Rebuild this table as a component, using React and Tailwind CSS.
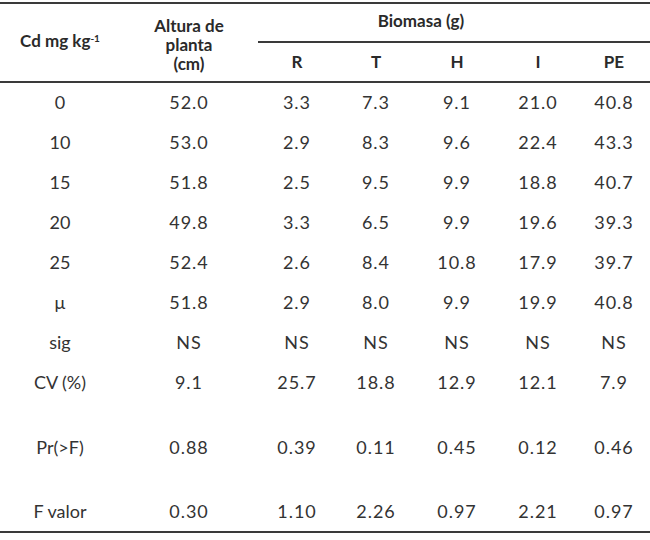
import React from 'react';

const rows = [
  ['0', '52.0', '3.3', '7.3', '9.1', '21.0', '40.8'],
  ['10', '53.0', '2.9', '8.3', '9.6', '22.4', '43.3'],
  ['15', '51.8', '2.5', '9.5', '9.9', '18.8', '40.7'],
  ['20', '49.8', '3.3', '6.5', '9.9', '19.6', '39.3'],
  ['25', '52.4', '2.6', '8.4', '10.8', '17.9', '39.7'],
  ['μ', '51.8', '2.9', '8.0', '9.9', '19.9', '40.8'],
  ['sig', 'NS', 'NS', 'NS', 'NS', 'NS', 'NS'],
  ['CV (%)', '9.1', '25.7', '18.8', '12.9', '12.1', '7.9'],
];

const Row = ({ cells, h }) => (
  <tr className={h}>
    {cells.map((c, i) => (
      <td key={i} className={i === 0 ? 'text-center align-middle' : 'text-center align-middle tracking-[1px]'}>{c}</td>
    ))}
  </tr>
);

const App = () => {
  return (
    <div className="w-[650px] h-[540px] bg-white pt-[2px] text-[#333] text-[18px]" style={{ fontFamily: 'Lato, "Open Sans", sans-serif' }}>
      <table className="w-full border-collapse border-t-2 border-b-2 border-[#3a3a3a] table-fixed">
        <colgroup>
          <col className="w-[120px]" />
          <col className="w-[138px]" />
          <col className="w-[78px]" />
          <col className="w-[80px]" />
          <col className="w-[82px]" />
          <col className="w-[80px]" />
          <col />
        </colgroup>
        <thead className="text-[17px] text-[#2a2a2a]">
          <tr className="h-[39px]">
            <th rowSpan={2} className="font-bold text-center align-middle border-b-2 border-[#3a3a3a] pb-1">
              Cd mg kg<sup className="text-[10px] font-bold">-1</sup>
            </th>
            <th rowSpan={2} className="font-bold text-center align-middle border-b-2 border-[#3a3a3a] leading-[19px] pt-1">
              Altura de<br />planta<br />(cm)
            </th>
            <th colSpan={5} className="font-bold text-center align-middle p-0">
              <div className="border-b-2 border-[#3a3a3a] h-[39px] flex items-center justify-center pr-[66px] pb-1">Biomasa (g)</div>
            </th>
          </tr>
          <tr className="h-[39px]">
            {['R', 'T', 'H', 'I', 'PE'].map((t) => (
              <th key={t} className="font-bold text-center align-middle border-b-2 border-[#3a3a3a]">{t}</th>
            ))}
          </tr>
        </thead>
        <tbody>
          {rows.map((r, i) => (
            <Row key={i} cells={r} h="h-[40px]" />
          ))}
          <Row cells={['Pr(>F)', '0.88', '0.39', '0.11', '0.45', '0.12', '0.46']} h="h-[90px]" />
          <Row cells={['F valor', '0.30', '1.10', '2.26', '0.97', '2.21', '0.97']} h="h-[40px]" />
        </tbody>
      </table>
    </div>
  );
};

export default App;
